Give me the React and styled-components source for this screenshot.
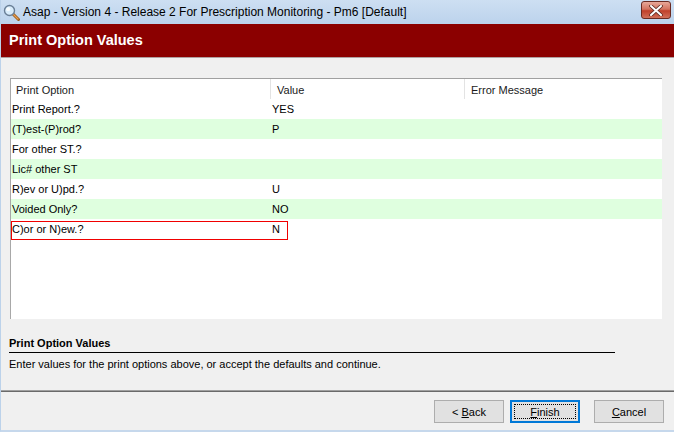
import React from 'react';
import styled, { createGlobalStyle } from 'styled-components';

const GlobalStyle = createGlobalStyle`
  html, body {
    margin: 0;
    padding: 0;
    background: #f0f0f0;
  }
  * {
    box-sizing: border-box;
  }
`;

const rows = [
  { option: 'Print Report.?', value: 'YES' },
  { option: '(T)est-(P)rod?', value: 'P' },
  { option: 'For other ST.?', value: '' },
  { option: 'Lic# other ST', value: '' },
  { option: 'R)ev or U)pd.?', value: 'U' },
  { option: 'Voided Only?', value: 'NO' },
  { option: 'C)or or N)ew.?', value: 'N', selected: true },
];

const MagnifierIcon = () => (
  <svg width="17" height="17" viewBox="0 0 17 17">
    <line x1="10" y1="10" x2="15.5" y2="15.5" stroke="#9a5a1c" strokeWidth="3" strokeLinecap="round" />
    <line x1="10" y1="10" x2="15" y2="15" stroke="#e8a050" strokeWidth="1.2" strokeLinecap="round" />
    <circle cx="6.5" cy="6.5" r="5" fill="#d8ecfb" stroke="#6a7f96" strokeWidth="1.4" />
    <circle cx="5.2" cy="5.2" r="2" fill="#ffffff" opacity="0.8" />
  </svg>
);

const App = () => {
  return (
    <>
      <GlobalStyle />
      <Window>
        <TitleBar>
          <MagnifierIcon />
          <TitleText>Asap - Version 4 - Release 2 For Prescription Monitoring - Pm6 [Default]</TitleText>
          <CloseButton>
            <svg width="14" height="11" viewBox="0 0 14 11">
              <path d="M2 1 L12 10 M12 1 L2 10" stroke="#5a2a22" strokeWidth="3.6" strokeLinecap="round" />
              <path d="M2 1 L12 10 M12 1 L2 10" stroke="#ffffff" strokeWidth="2" strokeLinecap="round" />
            </svg>
          </CloseButton>
        </TitleBar>
        <Banner>Print Option Values</Banner>
        <Body>
          <ListBox>
            <HeaderRow>
              <HeaderCell $width={260} $pad={5}>Print Option</HeaderCell>
              <HeaderCell $width={194}>Value</HeaderCell>
              <HeaderCell>Error Message</HeaderCell>
            </HeaderRow>
            {rows.map((row, i) => (
              <Row key={row.option} $alt={i % 2 === 1}>
                <Cell $width={260}>{row.option}</Cell>
                <Cell $width={194}>{row.value}</Cell>
                <Cell />
                {row.selected && <EditMarker />}
              </Row>
            ))}
          </ListBox>
          <InfoTitle>Print Option Values</InfoTitle>
          <InfoText>Enter values for the print options above, or accept the defaults and continue.</InfoText>
        </Body>
        <Footer>
          <Button>
            <span>&lt;&nbsp;<u>B</u>ack</span>
          </Button>
          <Button $primary>
            <FocusRing><span><u>F</u>inish</span></FocusRing>
          </Button>
          <Button $gap>
            <span><u>C</u>ancel</span>
          </Button>
        </Footer>
      </Window>
    </>
  );
};

const Window = styled.div`
  width: 674px;
  height: 432px;
  display: flex;
  flex-direction: column;
  background: #f0f0f0;
  border-left: 1px solid #bcd2ea;
  border-bottom: 2px solid #c6d8ec;
  font-family: "Liberation Sans", Arial, sans-serif;
  font-size: 11px;
  color: #000;
  overflow: hidden;
`;

const TitleBar = styled.div`
  height: 24px;
  display: flex;
  align-items: center;
  padding: 0 3px 0 2px;
  gap: 3px;
  background: linear-gradient(#cddff2, #bcd3ec);
`;

const TitleText = styled.div`
  flex: 1;
  font-size: 12px;
  color: #000;
  white-space: nowrap;
`;

const CloseButton = styled.div`
  width: 30px;
  height: 18px;
  margin-top: -4px;
  display: flex;
  align-items: center;
  justify-content: center;
  border: 1px solid #6b2b22;
  border-radius: 3px;
  background: linear-gradient(#e8a899 0%, #d3735f 45%, #c0402a 55%, #d0705a 100%);
`;

const Banner = styled.div`
  height: 34px;
  display: flex;
  align-items: center;
  padding-left: 8px;
  padding-bottom: 2px;
  background: #8b0000;
  color: #ffffff;
  font-weight: bold;
  font-size: 14.5px;
  border-bottom: 1px solid #b0a0a0;
`;

const Body = styled.div`
  flex: 1;
  display: flex;
  flex-direction: column;
  padding: 20px 12px 0 9px;
`;

const ListBox = styled.div`
  height: 241px;
  background: #ffffff;
  border-top: 1px solid #a0a0a0;
  border-left: 1px solid #a8a8a8;
`;

const HeaderRow = styled.div`
  height: 20px;
  display: flex;
`;

const HeaderCell = styled.div`
  ${p => (p.$width ? `width: ${p.$width}px;` : 'flex: 1;')}
  display: flex;
  align-items: center;
  padding-left: ${p => p.$pad || 6}px;
  padding-top: 1px;
  border-right: ${p => (p.$width ? '1px solid #e3e3e3' : 'none')};
  color: #1a1a1a;
`;

const Row = styled.div`
  position: relative;
  height: 20px;
  display: flex;
  align-items: center;
  background: ${p => (p.$alt ? '#dfffdf' : '#ffffff')};
`;

const Cell = styled.div`
  ${p => (p.$width ? `width: ${p.$width}px;` : 'flex: 1;')}
  padding-left: 1px;
  padding-bottom: 1px;
  white-space: nowrap;
`;

const EditMarker = styled.div`
  position: absolute;
  left: 0;
  top: 2px;
  width: 277px;
  height: 19px;
  background: transparent;
  box-shadow: inset 0 0 0 1px rgb(240, 0, 0);
  z-index: 1;
`;

const InfoTitle = styled.div`
  margin-top: 18px;
  width: 606px;
  margin-left: -1px;
  padding-bottom: 3px;
  border-bottom: 1px solid #000;
  font-weight: bold;
`;

const InfoText = styled.div`
  margin-top: 5px;
  margin-left: -1px;
`;

const Footer = styled.div`
  height: 40px;
  display: flex;
  align-items: flex-start;
  justify-content: flex-end;
  padding: 9px 10px 0 0;
  gap: 6px;
  border-top: 1px solid #a0a0a0;
  box-shadow: inset 0 1px 0 #6a6a6a;
`;

const Button = styled.div`
  width: 70px;
  height: 23px;
  display: flex;
  align-items: center;
  justify-content: center;
  background: #e1e1e1;
  border: ${p => (p.$primary ? '2px solid #0078d7' : '1px solid #adadad')};
  margin-left: ${p => (p.$gap ? '8px' : '0')};
  font-size: 11px;
  white-space: nowrap;
`;

const FocusRing = styled.div`
  width: 62px;
  height: 15px;
  display: flex;
  align-items: center;
  justify-content: center;
  border: 1px dotted #000;
`;

export default App;
